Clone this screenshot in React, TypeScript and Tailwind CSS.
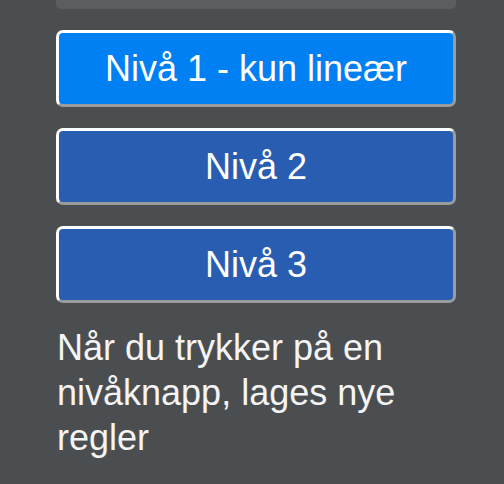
import React from "react";

const btnBase =
  "w-full h-[77px] rounded-[7px] border-[3px] border-t-white border-l-white border-r-[#999b9d] border-b-[#999b9d] text-white text-[36px] leading-none flex items-center justify-center";

export default function App() {
  return (
    <div
      className="w-[504px] h-[484px] bg-[#4b4e51] overflow-hidden"
      style={{ fontFamily: '"Liberation Sans", Arial, sans-serif' }}
    >
      <div className="mx-[56px] w-[400px] flex flex-col">
        <div className="h-[9px] bg-[#5b5e61] rounded-b-[5px]" />
        <div className="flex flex-col gap-[21px] mt-[21px]">
          <button className={`${btnBase} bg-[#0080f3]`}>Nivå 1 - kun lineær</button>
          <button className={`${btnBase} bg-[#295db1]`}>Nivå 2</button>
          <button className={`${btnBase} bg-[#295db1]`}>Nivå 3</button>
        </div>
        <p className="mt-[22px] text-[36px] leading-[45px] text-[#f4f4f4] pl-[1px]">
          Når du trykker på en nivåknapp, lages nye regler
        </p>
      </div>
    </div>
  );
}
